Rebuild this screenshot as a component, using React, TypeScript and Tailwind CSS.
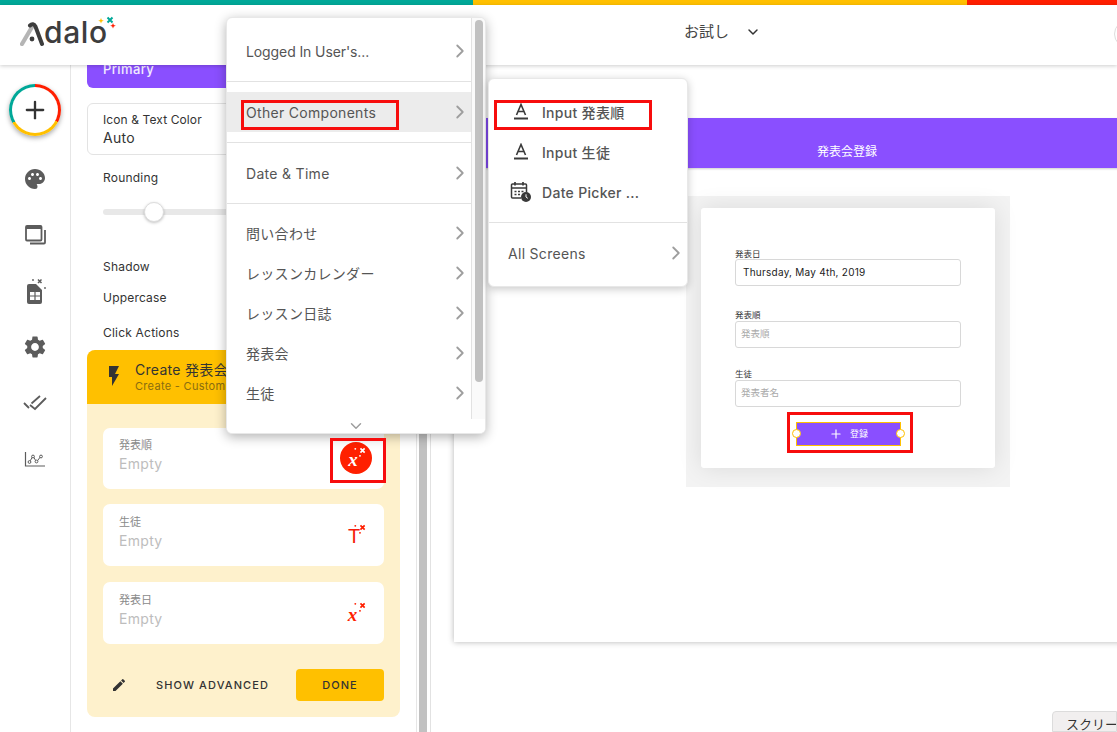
import React from "react";
import { ChevronRight, ChevronDown, Plus } from "lucide-react";
import { MdPalette, MdSettings, MdFlashOn, MdEdit } from "react-icons/md";

const FONT = "font-['Inter','Noto_Sans_CJK_JP',sans-serif]";

function Sparks({ color, className }: { color: string; className?: string }) {
  return (
    <svg width="16" height="16" viewBox="0 0 16 16" className={className}>
      <path d="M9 2.5l4.5 4.5M13.5 2.5L9 7" stroke={color} strokeWidth="1.8" />
      <circle cx="3.5" cy="3" r="1" fill={color} />
      <circle cx="8.5" cy="10.5" r="1" fill={color} />
    </svg>
  );
}

function Field({ label, icon, first }: { label: string; icon: React.ReactNode; first?: boolean }) {
  return (
    <div className={`bg-white rounded-[7px] flex justify-between pl-4 pr-3 ${first ? "h-[61px]" : "h-[62px]"}`}>
      <div className={first ? "pt-[9px]" : "pt-[10px]"}>
        <div className="text-[11px] leading-4 text-[#8a8a8a]">{label}</div>
        <div className="text-[14px] leading-5 mt-[1px] text-[#bdbdbd] tracking-[0.3px]">Empty</div>
      </div>
      {icon}
    </div>
  );
}

function Row({ label, active, tight }: { label: string; active?: boolean; tight?: boolean }) {
  return (
    <div className={`h-10 pl-[19px] flex items-center justify-between text-[14px] text-[#555] ${tight ? "tracking-[-0.1px]" : "tracking-[0.3px]"} ${active ? "bg-[#ececec]" : ""}`}>
      <span>{label}</span>
      <ChevronRight size={22} strokeWidth={2} className="text-[#9e9e9e]" />
    </div>
  );
}

function AIcon() {
  return (
    <svg width="16" height="18" viewBox="0 0 16 18" fill="none" stroke="#3a3a3a">
      <path d="M3.5 12L8 1.5 12.500 12M5 8.500h6" strokeWidth="1.600" />
      <path d="M1 15.500h14" strokeWidth="2" />
    </svg>
  );
}

function SubRow({ icon, label }: { icon: React.ReactNode; label: string }) {
  return (
    <div className="h-10 flex items-center text-[14px] font-medium text-[#555] tracking-[0.3px]">
      <div className="w-[53px] flex justify-center pl-[10px]">{icon}</div>
      <span>{label}</span>
    </div>
  );
}

function RedBox({ className }: { className: string }) {
  return <div className={`absolute border-[3px] border-[#f70d0d] z-50 pointer-events-none ${className}`} />;
}

function Input({ children, dark }: { children: string; dark?: boolean }) {
  return (
    <div className={`h-[27px] w-[226px] rounded-[3px] border border-[#d8d8d8] flex items-center ${dark ? "pl-[7px] text-[10px] text-[#222] tracking-[0.25px]" : "pl-[5px] text-[9.5px] text-[#aaa]"}`}>
      {children}
    </div>
  );
}

export default function App() {
  return (
    <div className={`relative w-[1117px] h-[732px] overflow-hidden bg-white ${FONT}`}>
      <div className="flex h-[5px]">
        <div className="w-[473px] bg-[#00a898]" />
        <div className="w-[494px] bg-[#ffc000]" />
        <div className="flex-1 bg-[#ff1f00]" />
      </div>

      <header className="relative z-20 h-[60px] bg-white shadow-[0_1px_4px_rgba(0,0,0,0.2)] flex items-center pl-5">
        <div className="relative flex items-center w-[98px] h-[30px] -mt-[6px]">
          <svg width="25" height="24" viewBox="0 0 25 24" className="mt-[3px]">
            <path d="M2 22L12 5" stroke="#b5b5b5" strokeWidth="4.200" strokeLinecap="round" fill="none" />
            <path d="M10 3.500C12 1.500 14 2 15.500 4.500L22 22" stroke="#3d3d3d" strokeWidth="4" strokeLinecap="round" fill="none" />
            <circle cx="12" cy="17" r="2.400" fill="#3d3d3d" />
          </svg>
          <span className="text-[30px] leading-none font-medium text-[#3d3d3d] -ml-[1px] tracking-[0.6px]">dalo</span>
          <svg width="22" height="18" viewBox="0 0 22 18" className="absolute left-[78px] -top-[1px]">
            <path d="M3 2l.8 2 2 .8-2 .8-.8 2-.8-2-2-.8 2-.8z" fill="#ffc000" />
            <path d="M9.500 1.500l5 5M14.500 1.500l-5 5" stroke="#00a898" strokeWidth="2" />
            <path d="M15 7l.8 2 2 .8-2 .8-.8 2-.8-2-2-.8 2-.8z" fill="#ff1f00" />
          </svg>
        </div>
        <div className="ml-[566px] -mt-[6px] flex items-center gap-[16px] text-[15px] text-[#444]">
          <span>お試し</span>
          <ChevronDown size={16} strokeWidth={2.2} className="text-[#333]" />
        </div>
        <div className="absolute left-[1114px] top-[15px] w-[28px] h-[28px] rounded-full border border-[#ddd]" />
      </header>

      <main className="flex h-[667px]">
        <nav className="w-[71px] border-r border-[#e6e6e6] flex flex-col items-center text-[#5c5c5c] pt-[19px]">
          <div className="w-[52px] h-[52px] rounded-full bg-[conic-gradient(#ff1f00_0deg_118deg,#ffc000_118deg_240deg,#00a898_240deg_360deg)] shadow-[0_2px_5px_rgba(0,0,0,0.35)] flex items-center justify-center">
            <div className="w-[46px] h-[46px] rounded-full bg-white flex items-center justify-center">
              <Plus size={28} strokeWidth={2} className="text-[#333]" />
            </div>
          </div>
          <MdPalette size={24} className="mt-[31px]" />
          <svg width="24" height="24" viewBox="0 0 24 24" className="mt-[32px]" fill="none" stroke="#5c5c5c">
            <rect x="3" y="3" width="15.500" height="14.500" rx="1" strokeWidth="1.800" />
            <path d="M3 4.500h15.500" strokeWidth="3" />
            <path d="M22 7v12.500a1 1 0 0 1-1 1H7" strokeWidth="1.800" />
          </svg>
          <svg width="24" height="28" viewBox="0 0 24 28" className="mt-[29px]">
            <path d="M4 10a2 2 0 0 1 2-2h7l6 6v12a2 2 0 0 1-2 2H6a2 2 0 0 1-2-2z" fill="#5c5c5c" />
            <path d="M7 16h10v8H7z" fill="#fff" />
            <path d="M7 20h10M12 16v8" stroke="#5c5c5c" strokeWidth="1.200" />
            <path d="M15 3.500l3.500 3.500M18.500 3.500L15 7" stroke="#5c5c5c" strokeWidth="1.500" />
            <circle cx="10" cy="4" r=".9" fill="#5c5c5c" />
            <circle cx="22" cy="12" r=".9" fill="#5c5c5c" />
          </svg>
          <MdSettings size={26} className="mt-[30px]" />
          <svg width="24" height="16" viewBox="0 0 24 16" className="mt-[35px]" fill="none" stroke="#5c5c5c" strokeWidth="1.800">
            <path d="M1 8l5 5M7 10l5 4L23 3M8.500 8.500L17 1" />
          </svg>
          <svg width="22" height="16" viewBox="0 0 22 16" className="mt-[40px]" fill="none" stroke="#5c5c5c">
            <path d="M1.500 1v14h19.500" strokeWidth="1.200" />
            <path d="M5.500 11L9 5l3.500 6L17 5" strokeWidth="1" />
            <circle cx="5.500" cy="11" r="1.400" strokeWidth="1" fill="#fff" />
            <circle cx="9" cy="5.500" r="1.400" strokeWidth="1" fill="#fff" />
            <circle cx="12.500" cy="10.500" r="1.400" strokeWidth="1" fill="#fff" />
            <circle cx="17" cy="5.500" r="1.400" strokeWidth="1" fill="#fff" />
          </svg>
        </nav>

        <aside className="w-[346px] border-r border-[#e6e6e6] px-4 text-[#333] overflow-hidden">
          <div className="h-[23px] bg-[#8a4fff] rounded-b-[6px] pl-4 text-[13px] font-medium leading-[8px] text-white/90 tracking-[0.4px]">
            Primary
          </div>
          <div className="mt-[15px] h-[52px] rounded-[6px] border border-[#e3e3e3] pl-[15px] pt-[8px]">
            <div className="text-[12px] leading-4 tracking-[0.1px]">Icon &amp; Text Color</div>
            <div className="text-[14px] leading-5 tracking-[0.3px]">Auto</div>
          </div>
          <div className="mt-[14px] pl-4 text-[12px] leading-[18px] tracking-[0.2px]">Rounding</div>
          <div className="mt-[15px] mx-4 h-5 relative flex items-center">
            <div className="h-[6px] w-full rounded-full bg-[#e8e8e8]" />
            <div className="absolute left-[41px] top-0 w-5 h-5 rounded-full bg-white border border-[#ddd] shadow-[0_1px_3px_rgba(0,0,0,0.25)]" />
          </div>
          <div className="mt-[36px] pl-4 text-[12px] leading-[18px] tracking-[0.2px]">Shadow</div>
          <div className="mt-[13px] pl-4 text-[12px] leading-[18px] tracking-[0.2px]">Uppercase</div>
          <div className="mt-[17px] pl-4 text-[12px] leading-[18px] tracking-[0.2px]">Click Actions</div>

          <section className="mt-[8px] h-[367px] bg-[#fef1cc] rounded-[8px] overflow-hidden">
            <div className="h-[54px] bg-[#ffc000] flex items-center pl-[15px]">
              <MdFlashOn size={24} className="text-[#333] mb-[2px]" />
              <div className="ml-[9px] whitespace-nowrap -mt-[1px]">
                <div className="text-[14px] leading-[18px] text-[#333] tracking-[0.3px]">Create 発表会</div>
                <div className="text-[11px] leading-[14px] text-[#8a6d10] tracking-[0.3px]">Create - Custom</div>
              </div>
            </div>
            <div className="px-4 pt-[24px] flex flex-col gap-[15px]">
              <Field
                first
                label="発表順"
                icon={
                  <div className="relative mt-[14px] w-8 h-8 rounded-full bg-[#ff2000] flex items-center justify-center">
                    <span className="font-['Liberation_Serif'] italic font-bold text-white text-[19px] leading-none mt-[3px] -ml-[6px]">x</span>
                    <Sparks color="#ffffff" className="absolute left-[12px] top-[4px] w-[15px] h-[15px]" />
                  </div>
                }
              />
              <Field
                label="生徒"
                icon={
                  <div className="relative mt-[14px] w-8 h-8 flex items-center justify-center">
                    <span className="font-['Liberation_Sans'] text-[#f51a0a] text-[20px] leading-none mt-[3px] -ml-[4px]">T</span>
                    <Sparks color="#ff1f00" className="absolute left-[12px] top-[5px] w-[15px] h-[15px]" />
                  </div>
                }
              />
              <div className="mt-px">
                <Field
                  label="発表日"
                  icon={
                    <div className="relative mt-[14px] w-8 h-8 flex items-center justify-center">
                      <span className="font-['Liberation_Serif'] italic font-bold text-[#ff1f00] text-[19px] leading-none mt-[4px] -ml-[7px]">x</span>
                      <Sparks color="#ff1f00" className="absolute left-[12px] top-[5px] w-[15px] h-[15px]" />
                    </div>
                  }
                />
              </div>
            </div>
            <div className="mt-[25px] pl-[24px] pr-4 flex items-center">
              <MdEdit size={16} className="text-[#333]" />
              <span className="ml-[29px] text-[11px] font-medium text-[#333] tracking-[1.1px] whitespace-nowrap">SHOW ADVANCED</span>
              <div className="ml-auto w-[88px] h-8 rounded-[4px] bg-[#ffc000] flex items-center justify-center text-[11px] font-medium text-[#333] tracking-[1.05px]">DONE</div>
            </div>
          </section>
        </aside>

        <div className="w-[14px] border-r border-[#e2e2e2] bg-white pl-[2px]">
          <div className="w-2 h-full bg-[#c1c1c1]" />
        </div>

        <div className="flex-1 pl-[23px] min-w-0">
          <div className="h-[577px] -mr-4 bg-white shadow-[0_0_6px_rgba(0,0,0,0.3)] pt-[53px]">
            <div className="h-[50px] bg-[#8a4fff] shadow-[0_1px_2px_rgba(0,0,0,0.2)] flex items-end pl-[363px] pb-[8px]">
              <span className="text-[12px] leading-4 text-white">発表会登録</span>
            </div>
            <div className="mt-[28px] ml-[232px] w-[324px] h-[291px] bg-[#f3f3f3] pt-3 pl-[15px]">
              <div className="w-[294px] h-[260px] bg-white rounded-[3px] shadow-[0_0_24px_rgba(0,0,0,0.1)] pl-[34px] pt-[41px]">
                <div className="text-[8.5px] leading-[10px] text-[#333]">発表日</div>
                <Input dark>Thursday, May 4th, 2019</Input>
                <div className="mt-[24px] text-[8.5px] leading-[11px] text-[#333]">発表順</div>
                <Input>発表順</Input>
                <div className="mt-[21px] text-[8.5px] leading-[11px] text-[#333]">生徒</div>
                <Input>発表者名</Input>
                <div className="relative mt-[15px] ml-[61px] w-[105px] h-[24px] bg-[#8a4fff] border border-[#ffc000] flex items-center justify-center gap-[7px] text-white">
                  <Plus size={14} strokeWidth={2} />
                  <span className="text-[9px]">登録</span>
                  <div className="absolute -left-[5px] top-[6px] w-[9px] h-[9px] rounded-full bg-white border border-[#ffc000]" />
                  <div className="absolute -right-[5px] top-[6px] w-[9px] h-[9px] rounded-full bg-white border border-[#ffc000]" />
                </div>
              </div>
            </div>
          </div>
        </div>
      </main>

      {/* Component menu */}
      <div className="absolute z-40 left-[226px] top-[17px] w-[260px] h-[417px] bg-white rounded-[6px] border border-[#e8e8e8] shadow-[0_3px_12px_rgba(0,0,0,0.3)] overflow-hidden flex">
        <div className="w-[245px] border-r border-[#e2e2e2] pt-[13px]">
          <Row label="Logged In User's..." tight />
          <div className="my-[10px] h-px bg-[#e2e2e2]" />
          <Row label="Other Components" active />
          <div className="my-[10px] h-px bg-[#e2e2e2]" />
          <Row label="Date &amp; Time" />
          <div className="mt-[10px] mb-[9px] h-px bg-[#e2e2e2]" />
          <Row label="問い合わせ" />
          <Row label="レッスンカレンダー" />
          <Row label="レッスン日誌" />
          <Row label="発表会" />
          <Row label="生徒" />
        </div>
        <div className="flex-1 pl-[3px] pt-[2px] bg-[#fafafa]">
          <div className="w-2 h-[362px] rounded-full bg-[#c1c1c1]" />
        </div>
        <div className="absolute bottom-0 left-0 right-0 h-[14px] bg-white flex justify-center">
          <ChevronDown size={18} strokeWidth={2} className="text-[#9e9e9e] -mt-[2px]" />
        </div>
      </div>

      {/* Sub menu */}
      <div className="absolute z-40 left-[488px] top-[78px] w-[200px] h-[209px] bg-white rounded-[6px] border border-[#e8e8e8] shadow-[0_2px_8px_rgba(0,0,0,0.22)] pt-[13px]">
        <SubRow icon={<AIcon />} label="Input 発表順" />
        <SubRow icon={<AIcon />} label="Input 生徒" />
        <SubRow
          icon={
            <svg width="22" height="22" viewBox="0 0 22 22" fill="none" stroke="#3a3a3a">
              <path d="M11 17H2.500a1 1 0 0 1-1-1V4a1 1 0 0 1 1-1h13a1 1 0 0 1 1 1v7" strokeWidth="1.500" />
              <path d="M1.500 7h15M5 1v3.500M13 1v3.500" strokeWidth="1.700" />
              <path d="M4.500 10.500h2M8 10.500h2M11.500 10.500h2M4.500 13.500h2M8 13.500h2" strokeWidth="1.300" />
              <circle cx="16" cy="16" r="5" fill="#3a3a3a" stroke="none" />
              <path d="M16 13.300V16l1.800 1.300" stroke="#fff" strokeWidth="1" />
            </svg>
          }
          label="Date Picker ..."
        />
        <div className="my-[10px] h-px bg-[#e2e2e2]" />
        <div className="h-10 pl-[19px] flex items-center justify-between text-[14px] text-[#555] tracking-[0.3px]">
          <span>All Screens</span>
          <ChevronRight size={22} strokeWidth={2} className="text-[#9e9e9e]" />
        </div>
      </div>

      <RedBox className="left-[241px] top-[100px] w-[158px] h-[30px]" />
      <RedBox className="left-[494px] top-[100px] w-[158px] h-[30px]" />
      <RedBox className="left-[330px] top-[438px] w-[56px] h-[45px]" />
      <RedBox className="left-[787px] top-[412px] w-[126px] h-[41px]" />

      <div className="absolute right-0 bottom-0 w-[65px] h-[21px] bg-[#f1efef] border border-[#dcdcdc] rounded-tl-[4px] pl-[13px] text-[13px] leading-[24px] text-[#333] whitespace-nowrap overflow-hidden">
        スクリー
      </div>
    </div>
  );
}
